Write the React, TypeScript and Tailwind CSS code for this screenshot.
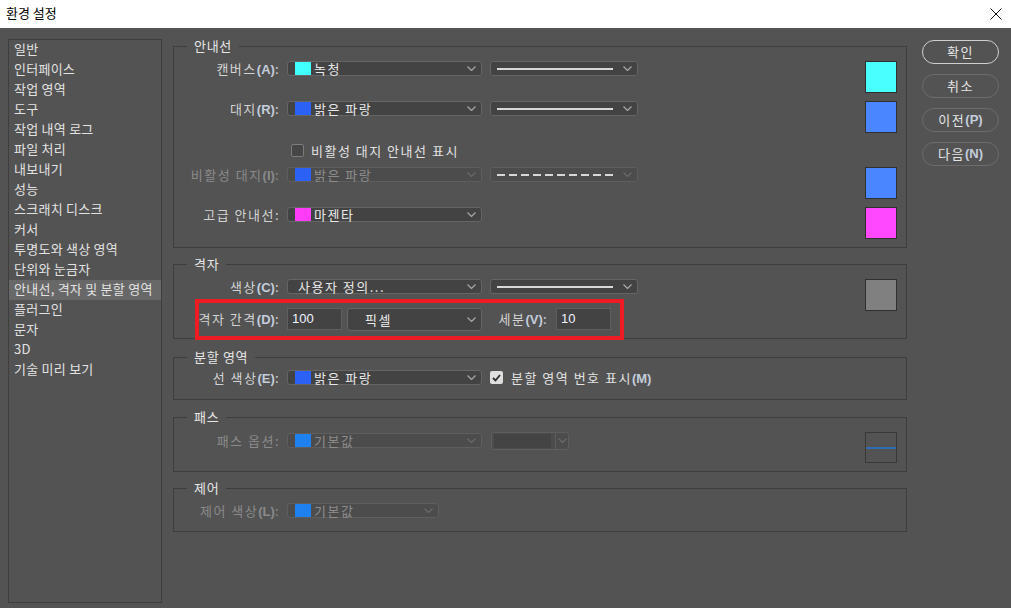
import type { ReactNode } from 'react';

const sideItems = [
  '일반',
  '인터페이스',
  '작업 영역',
  '도구',
  '작업 내역 로그',
  '파일 처리',
  '내보내기',
  '성능',
  '스크래치 디스크',
  '커서',
  '투명도와 색상 영역',
  '단위와 눈금자',
  '안내선, 격자 및 분할 영역',
  '플러그인',
  '문자',
  '3D',
  '기술 미리 보기',
];

const Key = (props: { k: string; dim?: boolean }) => (
  <span
    className={`font-['Liberation_Sans',sans-serif] font-bold tracking-normal ${props.dim ? 'text-[#8a8a8a]' : 'text-[#c3cddb]'}`}
  >
    ({props.k})
  </span>
);

const Chevron = (props: { dim?: boolean }) => (
  <svg width="9" height="5" viewBox="0 0 9 5" className="shrink-0">
    <path
      d="M0.5 0.5 L4.5 4.5 L8.5 0.5"
      fill="none"
      stroke={props.dim ? '#6a6a6a' : '#a8a8a8'}
      strokeWidth="1.2"
    />
  </svg>
);

const Label = (props: { children: ReactNode; dim?: boolean }) => (
  <div
    className={`w-[106px] shrink-0 text-right text-[13px] leading-none tracking-[1.5px] whitespace-nowrap ${props.dim ? 'text-[#8a8a8a]' : 'text-[#d2d2d2]'}`}
  >
    {props.children}
  </div>
);

const Select = (props: {
  className: string;
  swatch?: string;
  text: string;
  dim?: boolean;
}) => (
  <div
    className={`flex items-center rounded-[3px] border pr-[5px] ${props.dim ? 'border-[#5e5e5e] bg-[#4c4c4c]' : 'border-[#656565] bg-[#434343]'} ${props.className}`}
  >
    {props.swatch ? (
      <div className="ml-[7px] mr-[3px] h-[13px] w-[16px] shrink-0" style={{ background: props.swatch }} />
    ) : (
      <div className="w-[10px] shrink-0" />
    )}
    <div
      className={`flex-1 text-[13px] leading-none tracking-[1.5px] whitespace-nowrap ${props.dim ? 'text-[#8c8c8c]' : 'text-[#e8e8e8]'}`}
    >
      {props.text}
    </div>
    <Chevron dim={props.dim} />
  </div>
);

const LineSelect = (props: { dashed?: boolean; dim?: boolean }) => (
  <div
    className={`ml-[8px] flex h-[15px] w-[148px] items-center rounded-[3px] border pl-[6px] pr-[5px] ${props.dim ? 'border-[#5e5e5e] bg-[#4c4c4c]' : 'border-[#656565] bg-[#434343]'}`}
  >
    {props.dashed ? (
      <div className="flex w-[116px] gap-[4px]">
        {Array.from({ length: 10 }).map((_, i) => (
          <div key={i} className="h-[2px] w-[8px] bg-[#d8d8d8]" />
        ))}
      </div>
    ) : (
      <div className="h-[2px] w-[116px] bg-[#d8d8d8]" />
    )}
    <div className="flex-1" />
    <Chevron dim={props.dim} />
  </div>
);

const Swatch = (props: { color: string; className?: string }) => (
  <div
    className={`h-[32px] w-[32px] border border-[#303030] ${props.className ?? ''}`}
    style={{ background: props.color }}
  />
);

const Group = (props: { title: string; className: string; children: ReactNode }) => (
  <fieldset className={`w-[734px] border border-[#3e3e3e] ${props.className}`}>
    <legend className="ml-[13px] px-[7px] text-[13px] leading-[16px] tracking-[0.7px] text-[#e6e6e6]">
      {props.title}
    </legend>
    {props.children}
  </fieldset>
);

const Button = (props: { children: ReactNode; primary?: boolean }) => (
  <div
    className={`flex h-[24px] w-[77px] items-center justify-center rounded-full border text-[13px] tracking-[1.5px] text-[#e4e4e4] ${props.primary ? 'border-[#cfcfcf]' : 'border-[#6c6c6c]'}`}
  >
    {props.children}
  </div>
);

export default function App() {
  return (
    <div className="relative h-[608px] w-[1011px] overflow-hidden bg-[#535353] font-['Noto_Sans_CJK_KR',sans-serif]">
      {/* title bar */}
      <div className="flex h-[28px] items-center justify-between bg-white pl-[6px] pr-[9px]">
        <div className="mb-[3px] text-[13px] leading-none text-black">환경 설정</div>
        <svg width="12" height="12" viewBox="0 0 12 12">
          <path d="M0.5 0.5 L11.5 11.5 M11.5 0.5 L0.5 11.5" stroke="#111" strokeWidth="1" />
        </svg>
      </div>

      <div className="flex items-start pl-[8px]">
        {/* sidebar */}
        <div className="mt-[11px] h-[564px] w-[154px] shrink-0 border border-[#3e3e3e]">
          {sideItems.map((item) => (
            <div
              key={item}
              className={`flex h-[20px] items-center pb-[3px] pl-[5px] text-[13px] leading-none tracking-[0.25px] whitespace-nowrap text-[#e2e2e2] ${item.startsWith('안내선') ? 'bg-[#686868]' : ''}`}
            >
              {item}
            </div>
          ))}
        </div>

        {/* content */}
        <div className="ml-[11px] mt-[10px] flex flex-col">
          <Group title="안내선" className="h-[210px]">
            <div className="flex justify-between pr-[9px] pt-[7px]">
              <div className="flex flex-col">
                <div className="flex h-[15px] items-center">
                  <Label>
                    캔버스<Key k="A" />:
                  </Label>
                  <Select className="ml-[7px] h-[15px] w-[195px]" swatch="#42ffff" text="녹청" />
                  <LineSelect />
                </div>
                <div className="mt-[25px] flex h-[15px] items-center">
                  <Label>
                    대지<Key k="R" />:
                  </Label>
                  <Select className="ml-[7px] h-[15px] w-[195px]" swatch="#2b62f5" text="밝은 파랑" />
                  <LineSelect />
                </div>
                <div className="mt-[27px] flex h-[15px] items-center pl-[117px]">
                  <div className="h-[13px] w-[13px] rounded-[2px] border border-[#7c7c7c] bg-[#464646]" />
                  <div className="ml-[7px] text-[13px] leading-none tracking-[1.5px] text-[#e2e2e2]">
                    비활성 대지 안내선 표시
                  </div>
                </div>
                <div className="mt-[9px] flex h-[15px] items-center">
                  <Label dim>
                    비활성 대지<Key k="I" dim />:
                  </Label>
                  <Select className="ml-[7px] h-[15px] w-[195px]" swatch="#2b62f5" text="밝은 파랑" dim />
                  <LineSelect dashed dim />
                </div>
                <div className="mt-[25px] flex h-[15px] items-center">
                  <Label>고급 안내선:</Label>
                  <Select className="ml-[7px] h-[15px] w-[195px]" swatch="#ff3cf7" text="마젠타" />
                </div>
              </div>
              <div className="flex flex-col">
                <Swatch color="#4affff" />
                <Swatch color="#4a86ff" className="mt-[8px]" />
                <Swatch color="#4a86ff" className="mt-[34px]" />
                <Swatch color="#ff48ff" className="mt-[8px]" />
              </div>
            </div>
          </Group>

          <Group title="격자" className="mt-[8px] h-[83px]">
            <div className="flex justify-between pr-[9px] pt-[7px]">
              <div className="flex flex-col">
                <div className="flex h-[15px] items-center">
                  <Label>
                    색상<Key k="C" />:
                  </Label>
                  <Select className="ml-[7px] h-[15px] w-[195px]" text="사용자 정의..." />
                  <LineSelect />
                </div>
                <div className="mt-[14px] flex h-[22px] items-center">
                  <Label>
                    격자 간격<Key k="D" />:
                  </Label>
                  <div className="ml-[7px] flex h-[22px] w-[55px] items-center border border-[#5f5f5f] bg-[#434343] pl-[4px] font-['Liberation_Sans',sans-serif] text-[13px] text-[#eef3ff]">
                    100
                  </div>
                  <div className="ml-[5px] flex h-[23px] w-[135px] items-center rounded-[3px] border border-[#656565] bg-[#434343] pl-[17px] pr-[5px]">
                    <div className="flex-1 text-[13px] leading-none tracking-[1.5px] text-[#e8e8e8]">픽셀</div>
                    <Chevron />
                  </div>
                  <div className="w-[66px] text-right text-[13px] leading-none tracking-[1.5px] text-[#d2d2d2]">
                    세분<Key k="V" />:
                  </div>
                  <div className="ml-[8px] flex h-[22px] w-[55px] items-center border border-[#5f5f5f] bg-[#434343] pl-[4px] font-['Liberation_Sans',sans-serif] text-[13px] text-[#eef3ff]">
                    10
                  </div>
                </div>
              </div>
              <Swatch color="#808080" />
            </div>
          </Group>

          <Group title="분할 영역" className="mt-[10px] h-[51px]">
            <div className="mt-[5px] flex h-[15px] items-center">
              <Label>
                선 색상<Key k="E" />:
              </Label>
              <Select className="ml-[7px] h-[15px] w-[195px]" swatch="#2b62f5" text="밝은 파랑" />
              <div className="ml-[8px] flex h-[13px] w-[13px] items-center justify-center rounded-[2px] bg-[#dedede]">
                <svg width="9" height="8" viewBox="0 0 9 8">
                  <path d="M1 4 L3.5 6.5 L8 1" fill="none" stroke="#2a2a2a" strokeWidth="1.8" />
                </svg>
              </div>
              <div className="ml-[8px] text-[13px] leading-none tracking-[1.5px] text-[#e2e2e2]">
                분할 영역 번호 표시<Key k="M" />
              </div>
            </div>
          </Group>

          <Group title="패스" className="mt-[9px] h-[63px]">
            <div className="flex justify-between pr-[9px] pt-[7px]">
              <div className="mt-[1px] flex h-[15px] items-center">
                <Label dim>패스 옵션:</Label>
                <Select className="ml-[7px] h-[15px] w-[195px]" swatch="#1f80f0" text="기본값" dim />
                <div className="ml-[9px] flex h-[18px] w-[78px] items-center rounded-[3px] border border-[#5e5e5e] bg-[#4c4c4c]">
                  <div className="ml-[2px] h-[14px] w-[57px] bg-[#444444]" />
                  <div className="ml-[4px] h-full w-px bg-[#5e5e5e]" />
                  <div className="flex flex-1 justify-center">
                    <Chevron dim />
                  </div>
                </div>
              </div>
              <div className="flex h-[31px] w-[32px] items-center border border-[#383838]">
                <div className="h-[2px] w-full bg-[#2f6db3]" />
              </div>
            </div>
          </Group>

          <Group title="제어" className="mt-[8px] h-[52px]">
            <div className="mt-[7px] flex h-[15px] items-center">
              <Label dim>
                제어 색상<Key k="L" dim />:
              </Label>
              <Select className="ml-[7px] h-[15px] w-[152px]" swatch="#1f80f0" text="기본값" dim />
            </div>
          </Group>
        </div>

        {/* buttons */}
        <div className="ml-[15px] mt-[12px] flex flex-col gap-[10px]">
          <Button primary>확인</Button>
          <Button>취소</Button>
          <Button>
            이전<Key k="P" />
          </Button>
          <Button>
            다음<Key k="N" />
          </Button>
        </div>
      </div>

      {/* red highlight annotation */}
      <div className="absolute left-[195px] top-[299px] h-[41px] w-[429px] border-[4px] border-[#ed1c24]" />
    </div>
  );
}
